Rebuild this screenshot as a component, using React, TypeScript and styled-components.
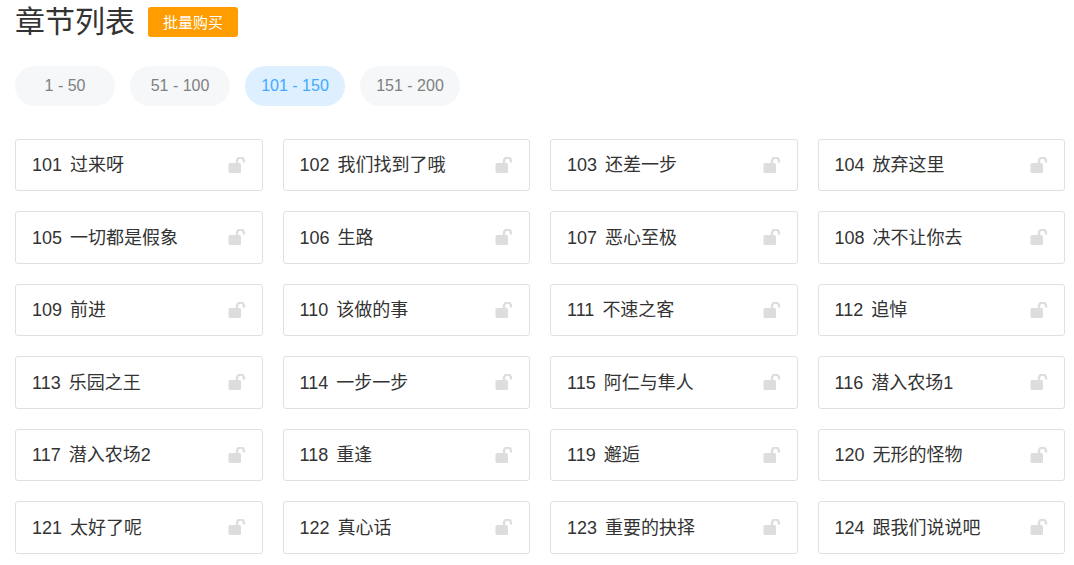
import React from "react";
import styled, { createGlobalStyle } from "styled-components";

const GlobalStyle = createGlobalStyle`
  html, body {
    margin: 0;
    padding: 0;
    background: #fff;
    font-family: "Liberation Sans", "Noto Sans CJK SC", sans-serif;
  }
`;

const Page = styled.div`
  width: 1050px;
  padding: 0 9px 0 15px;
  color: #333;
`;

const Header = styled.div`
  display: flex;
  align-items: center;
  height: 44px;
`;

const Title = styled.h1`
  margin: 0;
  font-size: 30px;
  font-weight: 400;
  line-height: 44px;
`;

const BuyButton = styled.button`
  width: 90px;
  height: 30px;
  margin-left: 13px;
  padding: 0 0 2px;
  border: none;
  border-radius: 3px;
  background: #ff9c00;
  color: #fff;
  font-family: inherit;
  font-size: 15px;
  cursor: pointer;
`;

const Tabs = styled.div`
  display: flex;
  gap: 15px;
  margin-top: 22px;
`;

const Tab = styled.div<{ $active?: boolean }>`
  width: 100px;
  height: 40px;
  border-radius: 20px;
  background: ${(p) => (p.$active ? "#def0ff" : "#f5f7f9")};
  color: ${(p) => (p.$active ? "#40a9ff" : "#808080")};
  font-size: 16px;
  line-height: 40px;
  text-align: center;
`;

const Grid = styled.div`
  display: grid;
  grid-template-columns: repeat(4, 1fr);
  grid-auto-rows: 52.5px;
  gap: 20px;
  margin-top: 32.75px;
`;

const Chapter = styled.div`
  display: flex;
  align-items: center;
  box-sizing: border-box;
  padding: 0 17px 0 16px;
  border: 1px solid #e0e0e0;
  border-radius: 3px;
  font-size: 18px;
  line-height: 24px;
`;

const ChapterNumber = styled.span`
  margin-right: 8px;
`;

const ChapterName = styled.span`
  flex: 1;
  white-space: nowrap;
`;

const LockSvg = styled.svg`
  width: 18px;
  height: 16px;
  margin: -1px -1px 0 0;
  color: #ddd;
`;

const UnlockIcon = () => (
  <LockSvg viewBox="0 0 18 16">
    <rect x="0.5" y="6" width="12.5" height="10" rx="1.5" fill="currentColor" />
    <path
      d="M9 6.5V4a3.5 3.5 0 0 1 7 0v1.5"
      fill="none"
      stroke="currentColor"
      strokeWidth="2.4"
    />
  </LockSvg>
);

const tabs = ["1 - 50", "51 - 100", "101 - 150", "151 - 200"];

const chapters = [
  "过来呀", "我们找到了哦", "还差一步", "放弃这里",
  "一切都是假象", "生路", "恶心至极", "决不让你去",
  "前进", "该做的事", "不速之客", "追悼",
  "乐园之王", "一步一步", "阿仁与隼人", "潜入农场1",
  "潜入农场2", "重逢", "邂逅", "无形的怪物",
  "太好了呢", "真心话", "重要的抉择", "跟我们说说吧",
];

const App: React.FC = () => {
  return (
    <Page>
      <GlobalStyle />
      <Header>
        <Title>章节列表</Title>
        <BuyButton>批量购买</BuyButton>
      </Header>
      <Tabs>
        {tabs.map((t) => (
          <Tab key={t} $active={t === "101 - 150"}>
            {t}
          </Tab>
        ))}
      </Tabs>
      <Grid>
        {chapters.map((name, i) => (
          <Chapter key={name}>
            <ChapterNumber>{101 + i}</ChapterNumber>
            <ChapterName>{name}</ChapterName>
            <UnlockIcon />
          </Chapter>
        ))}
      </Grid>
    </Page>
  );
};

export default App;
